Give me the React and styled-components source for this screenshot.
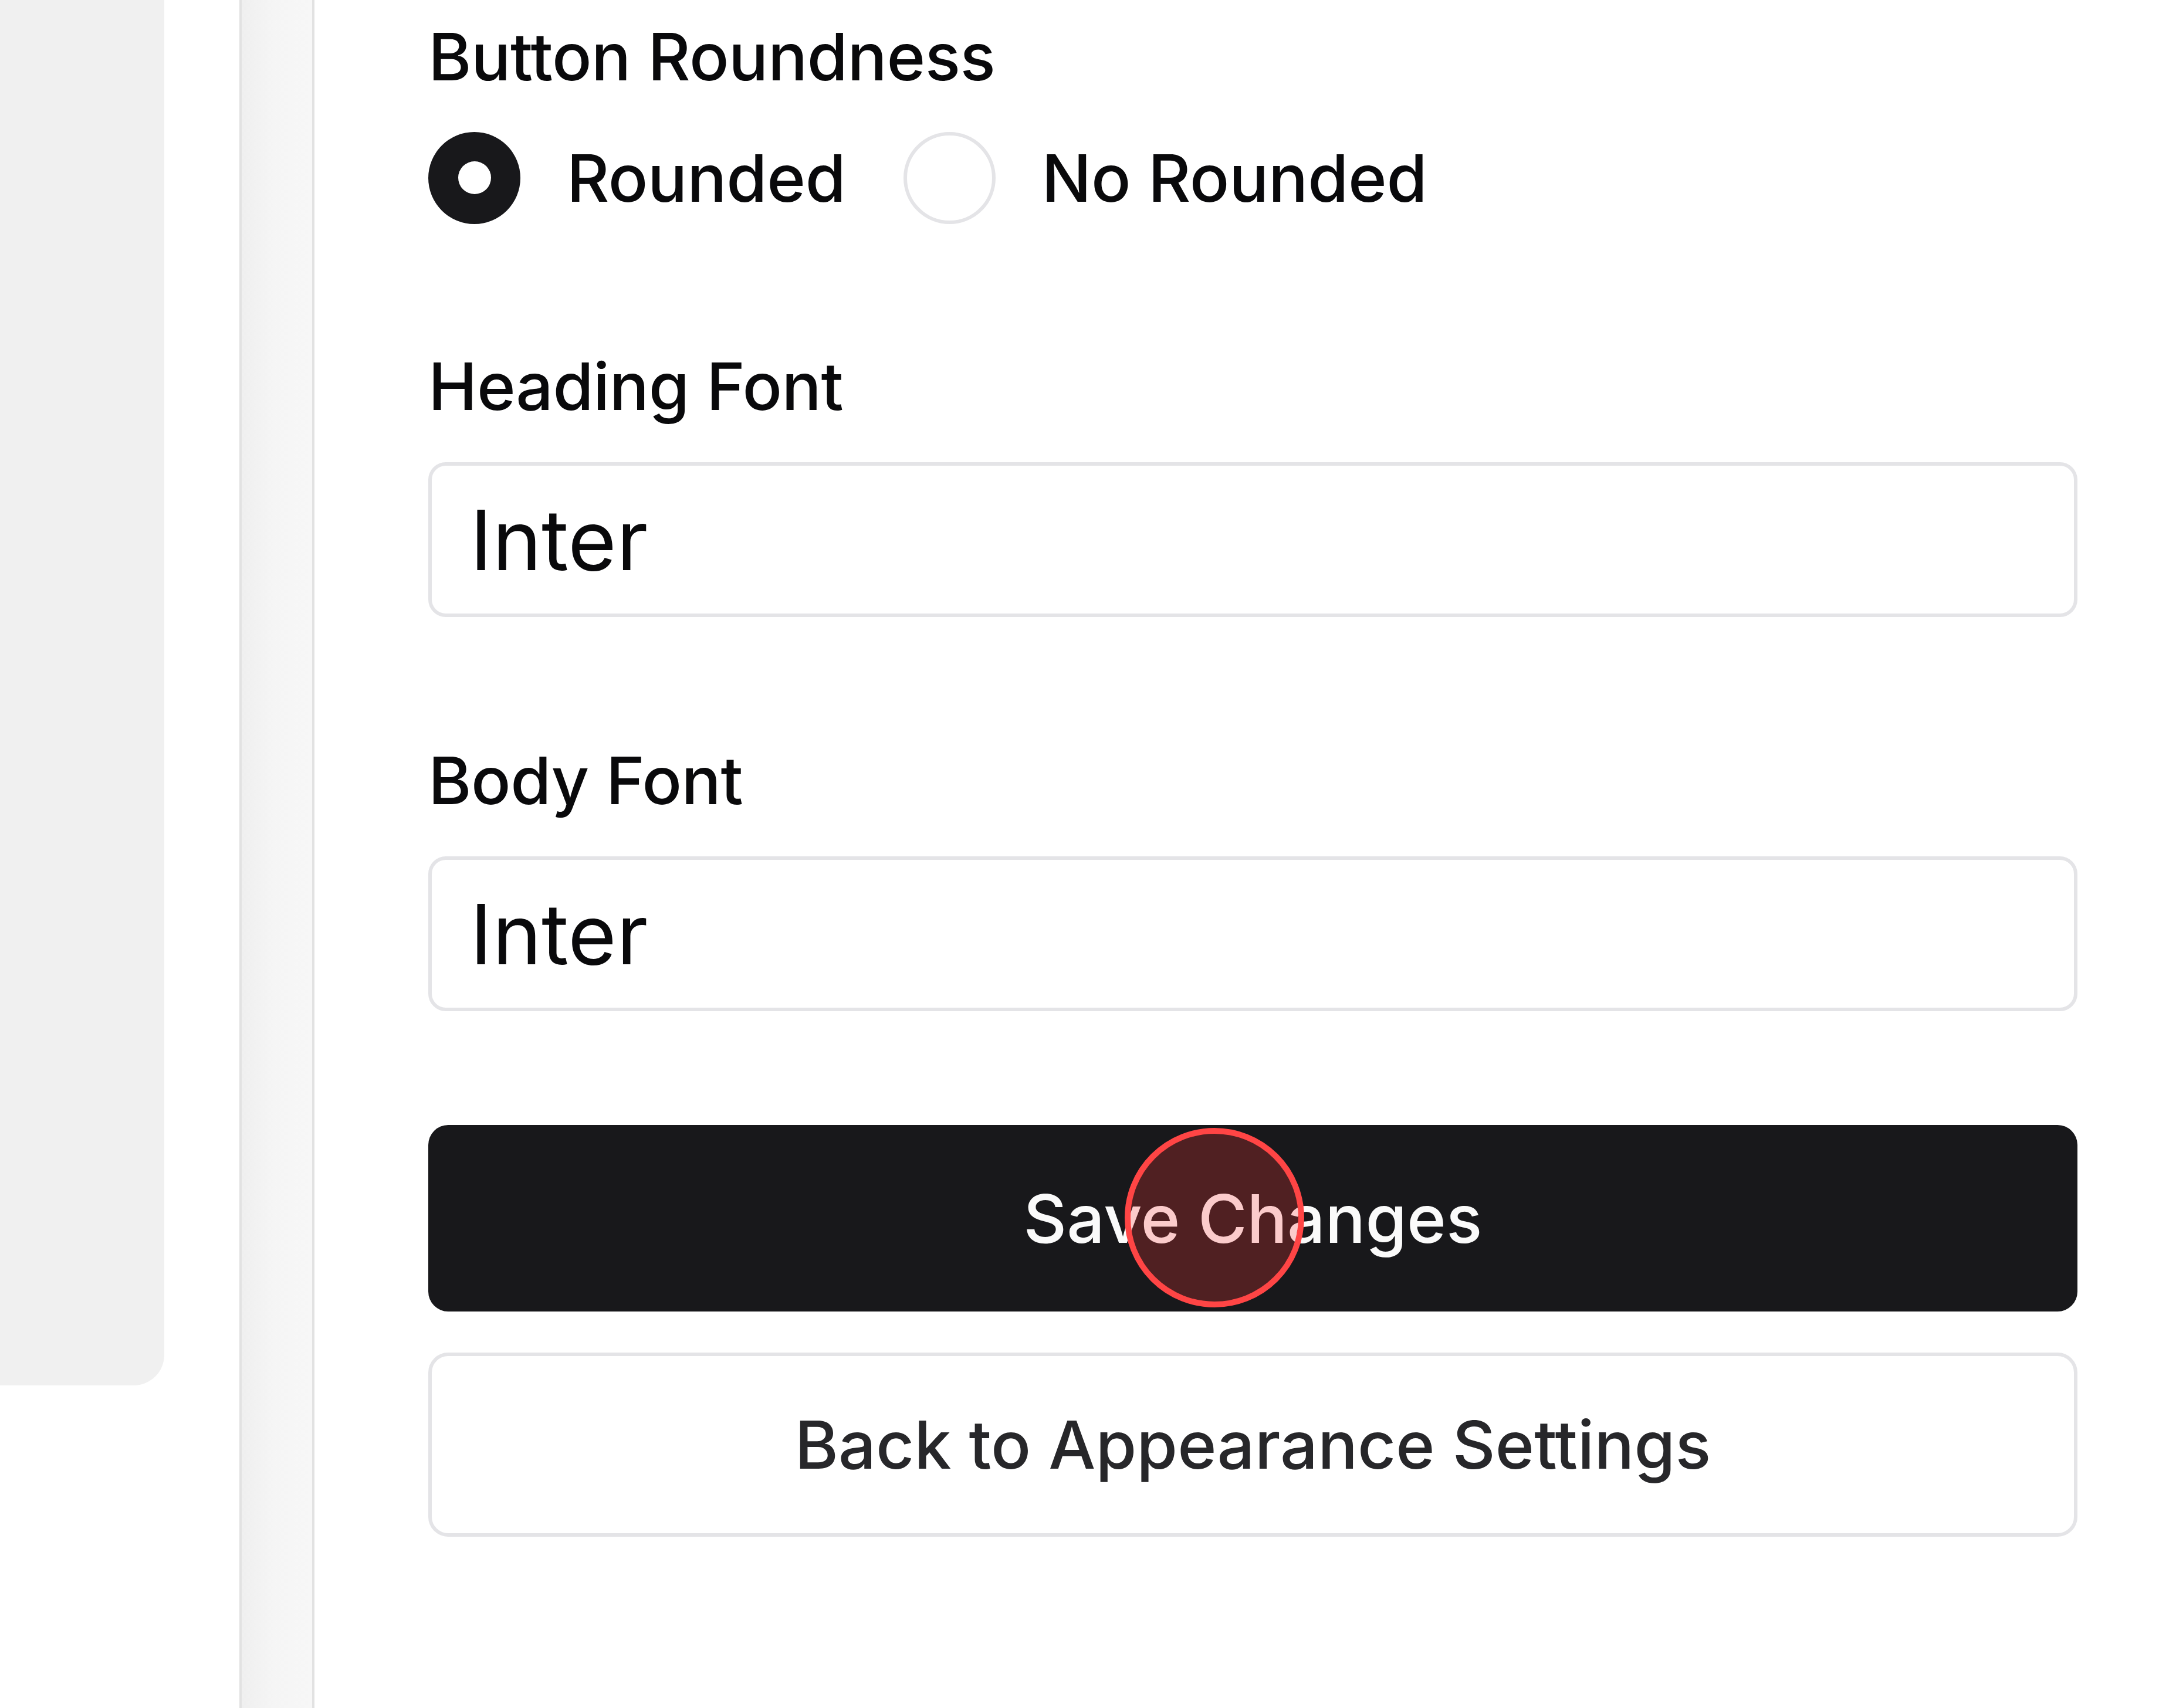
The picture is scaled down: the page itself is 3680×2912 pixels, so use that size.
import React from "react";
import styled, { createGlobalStyle } from "styled-components";

const Global = createGlobalStyle`
  html, body { margin: 0; padding: 0; background: #ffffff; }
  body { font-family: Inter, "Noto Sans", sans-serif; color: #09090b; }
  * { box-sizing: border-box; }
`;

const Page = styled.div`
  display: flex;
  align-items: flex-start;
  width: 3680px;
  height: 2912px;
  overflow: hidden;
  background: #ffffff;
`;

const SidePanel = styled.div`
  width: 280px;
  height: 2362px;
  flex: none;
  background: #f0f0f0;
  border-bottom-right-radius: 52px;
`;

const ScrollStrip = styled.div`
  flex: none;
  width: 128px;
  height: 100%;
  margin-left: 128px;
  border-left: 4px solid #e2e2e2;
  border-right: 4px solid #e2e2e2;
  background: linear-gradient(90deg, #efefef 0%, #f5f5f5 45%, #f7f7f7 100%);
`;

const Main = styled.main`
  flex: 1;
  display: flex;
  flex-direction: column;
  padding: 12px 139px 0 194px;
`;

const Group = styled.section`
  display: flex;
  flex-direction: column;
  gap: ${(p) => p.$gap}px;
  margin-top: ${(p) => p.$top || 0}px;
`;

const Label = styled.div`
  font-size: 112px;
  font-weight: 500;
  line-height: 168px;
  color: #09090b;
  letter-spacing: -0.5px;
`;

const RadioRow = styled.div`
  display: flex;
  align-items: center;
  gap: 98px;
  height: 158px;
`;

const RadioItem = styled.label`
  display: flex;
  align-items: center;
  gap: 79px;
  font-size: 112px;
  font-weight: 500;
  color: #09090b;
  letter-spacing: -0.3px;
`;

const RadioCircle = styled.span`
  width: 157px;
  height: 157px;
  flex: none;
  border-radius: 50%;
  display: flex;
  align-items: center;
  justify-content: center;
  background: ${(p) => (p.$checked ? "#18181b" : "#ffffff")};
  border: ${(p) => (p.$checked ? "none" : "6px solid #e4e4e7")};
  &::after {
    content: "";
    display: ${(p) => (p.$checked ? "block" : "none")};
    width: 56px;
    height: 56px;
    border-radius: 50%;
    background: #ffffff;
  }
`;

const Input = styled.div`
  height: 264px;
  border: 6px solid #e4e4e7;
  border-radius: 30px;
  display: flex;
  align-items: center;
  padding-left: 65px;
  font-size: 142px;
  font-weight: 400;
  color: #09090b;
  background: #ffffff;
`;

const Button = styled.button`
  position: relative;
  height: ${(p) => p.$h}px;
  width: 100%;
  border-radius: 34px;
  font-family: Inter, "Noto Sans", sans-serif;
  font-size: ${(p) => (p.$primary ? 114 : 113)}px;
  font-weight: 500;
  display: flex;
  align-items: center;
  justify-content: center;
  cursor: pointer;
  background: ${(p) => (p.$primary ? "#18181b" : "#ffffff")};
  color: ${(p) => (p.$primary ? "#fafafa" : "#27272a")};
  border: ${(p) => (p.$primary ? "none" : "6px solid #e4e4e7")};
  overflow: visible;
`;

const TouchMarker = styled.span`
  position: absolute;
  left: ${(p) => p.$x}px;
  top: ${(p) => p.$y}px;
  width: 306px;
  height: 306px;
  margin: -153px 0 0 -153px;
  border-radius: 50%;
  border: 10px solid #ff4545;
  background: rgba(255, 59, 59, 0.245);
  pointer-events: none;
`;

export default function App() {
  return (
    <>
      <Global />
      <Page>
        <SidePanel />
        <ScrollStrip />
        <Main>
          <Group $gap={44}>
            <Label>Button Roundness</Label>
            <RadioRow>
              <RadioItem>
                <RadioCircle $checked />
                Rounded
              </RadioItem>
              <RadioItem>
                <RadioCircle />
                No Rounded
              </RadioItem>
            </RadioRow>
          </Group>
          <Group $gap={46} $top={192}>
            <Label>Heading Font</Label>
            <Input>Inter</Input>
          </Group>
          <Group $gap={46} $top={194}>
            <Label>Body Font</Label>
            <Input>Inter</Input>
          </Group>
          <Group $gap={70} $top={194}>
            <Button $primary $h={318}>
              Save Changes
              <TouchMarker $x={1340} $y={158} />
            </Button>
            <Button $h={314}>Back to Appearance Settings</Button>
          </Group>
        </Main>
      </Page>
    </>
  );
}
